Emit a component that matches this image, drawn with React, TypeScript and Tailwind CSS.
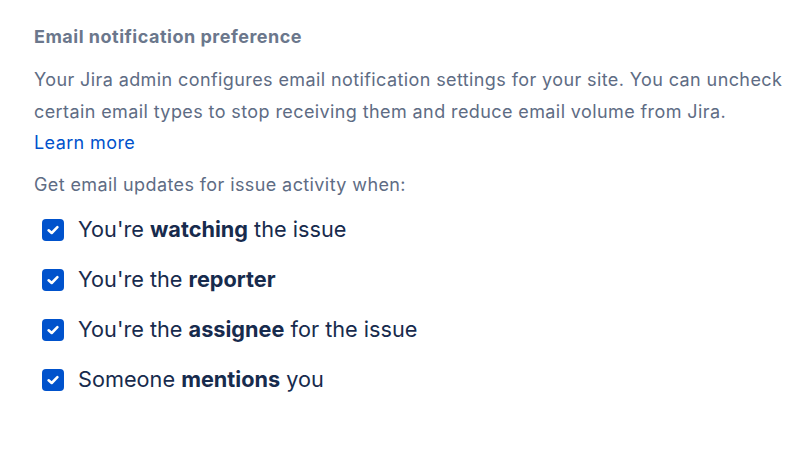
import React from "react";

function Check() {
  return (
    <span className="flex h-[22px] w-[22px] shrink-0 items-center justify-center rounded-[4px] bg-[#0052CC]">
      <svg width="14" height="14" viewBox="0 0 14 14" fill="none">
        <path d="M2.6 7.3 L5.7 10 L11.4 4.2" stroke="white" strokeWidth="2.6" strokeLinecap="round" strokeLinejoin="round" />
      </svg>
    </span>
  );
}

const items: React.ReactNode[] = [
  <>You're <b className="font-bold">watching</b> the issue</>,
  <>You're the <b className="font-bold">reporter</b></>,
  <>You're the <b className="font-bold">assignee</b> for the issue</>,
  <>Someone <b className="font-bold">mentions</b> you</>,
];

export default function App() {
  return (
    <div className="h-[456px] w-[792px] overflow-hidden bg-white pl-[34px] pt-[25px] font-['Inter',sans-serif]">
      <h2 className="whitespace-nowrap text-[18px] font-bold leading-[24px] tracking-[0.5px] text-[#6B778C]">Email notification preference</h2>
      <p className="mt-[15px] whitespace-nowrap text-[18px] leading-[31.5px] tracking-[0.4px] text-[#5E6C84]">
        Your Jira admin configures email notification settings for your site. You can uncheck
        <br />
        certain email types to stop receiving them and reduce email volume from Jira.
        <br />
        <a className="text-[#0052CC]" href="#">Learn more</a>
      </p>
      <p className="mt-[10px] whitespace-nowrap text-[18px] leading-[31px] tracking-[0.4px] text-[#5E6C84]">Get email updates for issue activity when:</p>
      <ul className="mt-[19px] flex flex-col gap-[28px] pl-[8px]">
        {items.map((t, i) => (
          <li key={i} className="flex h-[22px] items-center gap-[14px] whitespace-nowrap text-[21.7px] text-[#172B4D]">
            <Check />
            <span>{t}</span>
          </li>
        ))}
      </ul>
    </div>
  );
}
